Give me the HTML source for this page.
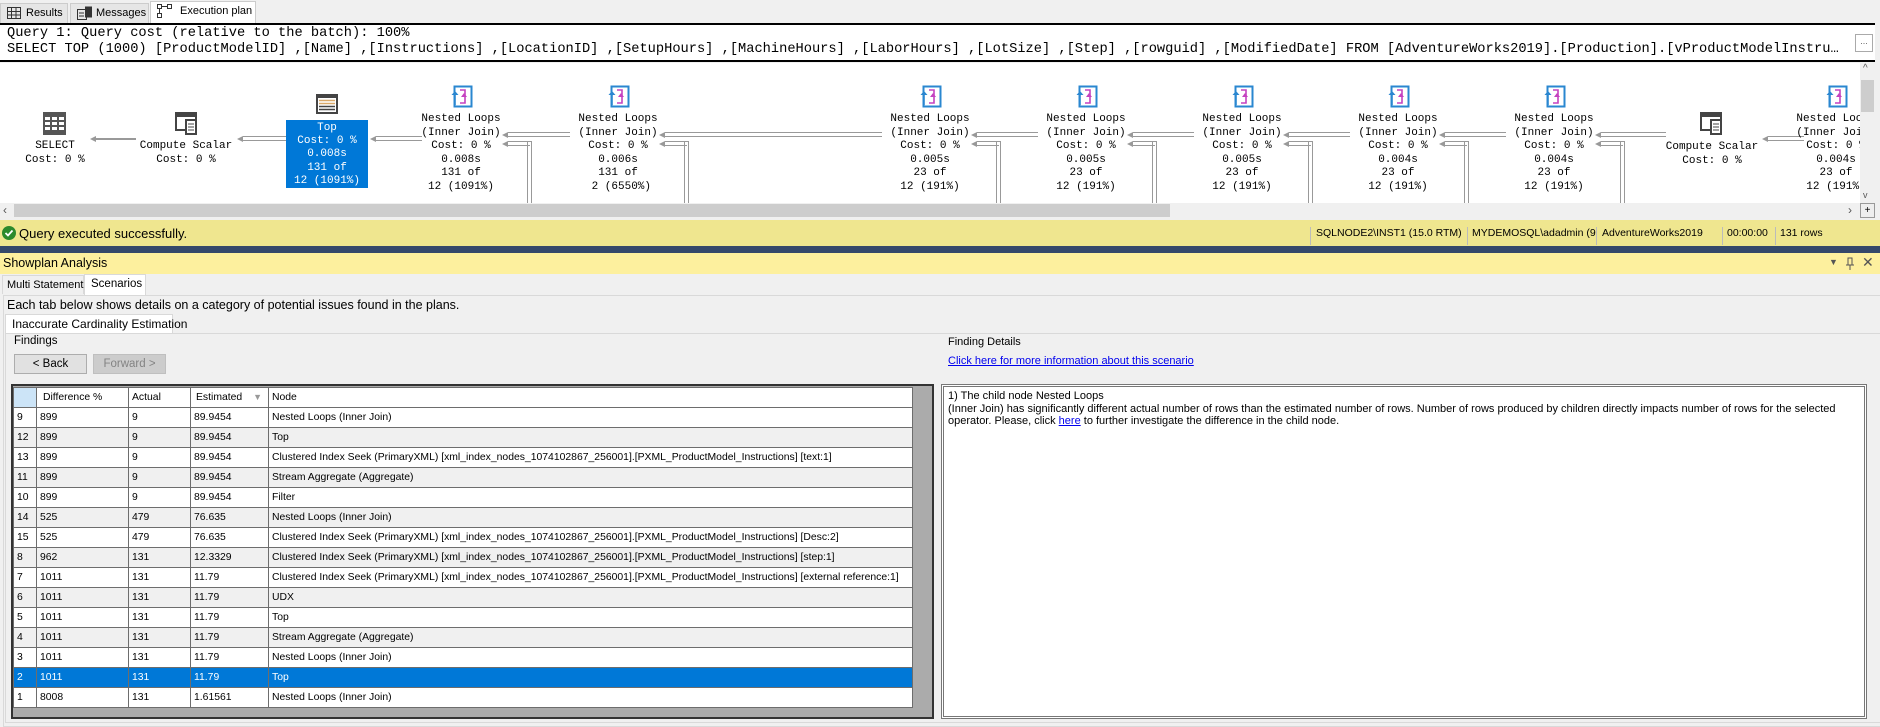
<!DOCTYPE html>
<html><head><meta charset="utf-8"><style>
*{margin:0;padding:0;box-sizing:border-box}
body{width:1880px;height:727px;position:relative;background:#f0f0f0;font-family:"Liberation Sans",sans-serif;font-size:12px;color:#000;overflow:hidden;white-space:nowrap}
.a{position:absolute}
.tab{position:absolute;top:3px;height:20px;background:#e6e6e6;border:1px solid #ccc;border-bottom:none;font-size:11px;line-height:18px;padding-left:25px;overflow:hidden}
.mono{font-family:"Liberation Mono",monospace}
.node{position:absolute;width:140px;text-align:center;font-family:"Liberation Mono",monospace;font-size:11px;line-height:13.5px;white-space:pre}
.dl{position:absolute;height:5px;border-top:1px solid #999;border-bottom:1px solid #999}
.dv{position:absolute;width:5px;border-left:1px solid #999;border-right:1px solid #999}
.ah{position:absolute;width:0;height:0;border-top:3px solid transparent;border-bottom:3px solid transparent;border-right:6px solid #999}
table{border-collapse:collapse;font-size:10.4px;table-layout:fixed;width:899px}
td{border:1px solid #6d6d6d;height:20px;padding:0 0 0 3px;white-space:nowrap;overflow:hidden}
.sb{position:absolute;top:227px;height:18px;border-left:1px solid #bbb;padding-left:5px;font-size:10.5px;overflow:hidden}
</style></head><body>
<div class="a" style="left:0;top:0;width:1880px;height:23px;background:#f0f0f0"></div>
<div class="tab" style="left:0;width:68px">Results</div>
<div class="tab" style="left:70px;width:79px">Messages</div>
<div class="tab" style="left:150px;top:1px;height:22px;width:106px;background:#fff;padding-left:29px">Execution plan</div>
<svg class="a" style="left:7px;top:7px" width="14" height="12"><rect x=".5" y=".5" width="13" height="11" fill="none" stroke="#333"/><path d="M1 4.5H13M1 8H13M4.5 1V11M9 1V11" stroke="#333"/></svg>
<svg class="a" style="left:77px;top:6px" width="16" height="14"><rect x=".5" y="3.5" width="9" height="10" fill="none" stroke="#333"/><rect x="8" y=".5" width="7" height="11" fill="#333"/><path d="M2 7h5M2 10h5" stroke="#333"/></svg>
<svg class="a" style="left:157px;top:4px" width="16" height="14"><rect x=".5" y=".5" width="4" height="4" fill="none" stroke="#333"/><rect x="10.5" y=".5" width="4" height="4" fill="none" stroke="#333"/><rect x=".5" y="9.5" width="4" height="4" fill="none" stroke="#333"/><path d="M5 2.5h5M2.5 5v4" stroke="#333"/></svg>
<div class="a" style="left:0;top:23px;width:1875px;height:39px;background:#fff;border-top:2px solid #000;border-bottom:2px solid #000"></div>
<div class="a mono" style="left:7px;top:26px;font-size:13.7px;line-height:16px;white-space:pre">Query 1: Query cost (relative to the batch): 100%
SELECT TOP (1000) [ProductModelID] ,[Name] ,[Instructions] ,[LocationID] ,[SetupHours] ,[MachineHours] ,[LaborHours] ,[LotSize] ,[Step] ,[rowguid] ,[ModifiedDate] FROM [AdventureWorks2019].[Production].[vProductModelInstru…</div>
<div class="a" style="left:1855px;top:34px;width:18px;height:18px;border:1px solid #aaa;background:#fff;font-size:9px;text-align:center;line-height:12px;color:#666">...</div>
<div class="a" style="left:0;top:63px;width:1860px;height:140px;background:#fff"></div>

<svg class="a" style="left:43px;top:112px" width="23" height="23"><rect x="0" y="0" width="23" height="23" fill="#555"/><g fill="#fff"><rect x="2" y="5" width="5" height="3"/><rect x="9" y="5" width="5" height="3"/><rect x="16" y="5" width="5" height="3"/><rect x="2" y="10" width="5" height="3"/><rect x="9" y="10" width="5" height="3"/><rect x="16" y="10" width="5" height="3"/><rect x="2" y="15" width="5" height="3"/><rect x="9" y="15" width="5" height="3"/><rect x="16" y="15" width="5" height="3"/></g></svg>
<div class="node" style="left:-15px;top:140px">SELECT
Cost: 0 %</div>
<div class="a" style="left:96px;top:138px;width:40px;height:2px;background:#999"></div><div class="ah" style="left:90px;top:136px"></div>
<svg class="a" style="left:175px;top:112px" width="23" height="23"><rect x="1" y="1" width="20" height="17" fill="#fff" stroke="#444" stroke-width="2"/><rect x="1" y="1" width="20" height="4" fill="#444"/><rect x="11" y="8" width="10" height="14" fill="#fff" stroke="#444" stroke-width="2"/><path d="M13 12h6M13 15h6M13 18h6" stroke="#444"/></svg>
<div class="node" style="left:116px;top:140px">Compute Scalar
Cost: 0 %</div>
<div class="dl" style="left:243px;top:136px;width:43px"></div><div class="ah" style="left:237px;top:136px"></div>
<svg class="a" style="left:316px;top:94px" width="22" height="20"><rect x="0" y="0" width="22" height="20" fill="#444"/><rect x="2" y="4" width="18" height="14" fill="#fff"/><path d="M3 6.5h16M3 9.5h16" stroke="#d9a96a" stroke-width="1.5"/><path d="M3 12.5h16M3 15.5h16" stroke="#444" stroke-width="1.5"/></svg>
<div class="a" style="left:286px;top:120px;width:82px;height:68px;background:#0078d7"></div>
<div class="node" style="left:257px;top:122px;color:#fff;line-height:13.2px">Top
Cost: 0 %
0.008s
131 of
12 (1091%)</div>
<div class="dl" style="left:376px;top:136px;width:46px"></div><div class="ah" style="left:370px;top:136px"></div>

<div id="nl"></div>
<script>
var cs=[461,618,930,1086,1242,1398,1554],d=[["0.008s","131 of","12 (1091%)"],["0.006s","131 of"," 2 (6550%)"],["0.005s","23 of","12 (191%)"],["0.005s","23 of","12 (191%)"],["0.005s","23 of","12 (191%)"],["0.004s","23 of","12 (191%)"],["0.004s","23 of","12 (191%)"]];
var h="";
function icon(c){return '<svg class="a" style="left:'+(c-10)+'px;top:85px" width="22" height="23"><rect x="3.5" y="1.5" width="17" height="20" fill="#fff" stroke="#2a87d0" stroke-width="2"/><path d="M9 5h5v13H9" fill="none" stroke="#c542c0" stroke-width="1.6"/><path d="M13 8l3 4h-6z" fill="#c542c0"/><path d="M4 20V9" stroke="#2a87d0" stroke-width="1.6"/><path d="M0.5 10l3.5-4 3.5 4z" fill="#2a87d0"/></svg>';}
for(var i=0;i<cs.length;i++){var c=cs[i];
h+=icon(c);
h+='<div class="node" style="left:'+(c-70)+'px;top:113px">Nested Loops\n(Inner Join)\nCost: 0 %\n'+d[i].join("\n")+'</div>';
h+='<div class="dl" style="left:'+(c+47)+'px;top:141px;width:22px;border-right:0"></div><div class="ah" style="left:'+(c+41)+'px;top:141px"></div>';
h+='<div class="dv" style="left:'+(c+66)+'px;top:141px;height:62px;border-top:1px solid #999"></div>';
var nx=(i<cs.length-1)?cs[i+1]-48:1666;
h+='<div class="dl" style="left:'+(c+47)+'px;top:132px;width:'+(nx-c-47)+'px"></div><div class="ah" style="left:'+(c+41)+'px;top:132px"></div>';
}
h+='<svg class="a" style="left:1700px;top:112px" width="23" height="23"><rect x="1" y="1" width="20" height="17" fill="#fff" stroke="#444" stroke-width="2"/><rect x="1" y="1" width="20" height="4" fill="#444"/><rect x="11" y="8" width="10" height="14" fill="#fff" stroke="#444" stroke-width="2"/><path d="M13 12h6M13 15h6M13 18h6" stroke="#444"/></svg>';
h+='<div class="node" style="left:1642px;top:141px">Compute Scalar\nCost: 0 %</div>';
h+='<div class="dl" style="left:1768px;top:136px;width:36px"></div><div class="ah" style="left:1762px;top:136px"></div>';
h+=icon(1836);
h+='<div class="node" style="left:1766px;top:113px">Nested Loops\n(Inner Join)\nCost: 0 %\n0.004s\n23 of\n12 (191%)</div>';
document.getElementById("nl").outerHTML=h;
</script>
<div class="a" style="left:1860px;top:63px;width:15px;height:140px;background:#f0f0f0"></div>
<div class="a" style="left:1861px;top:80px;width:13px;height:32px;background:#cdcdcd"></div>
<div class="a" style="left:1863px;top:63px;font-size:10px;color:#555">&#94;</div>
<div class="a" style="left:1863px;top:190px;font-size:9px;color:#555">v</div>
<div class="a" style="left:0;top:203px;width:1860px;height:15px;background:#f0f0f0"></div>
<div class="a" style="left:14px;top:204px;width:1156px;height:13px;background:#cdcdcd"></div>
<div class="a" style="left:3px;top:203px;font-size:12px;color:#555">&lsaquo;</div>
<div class="a" style="left:1848px;top:203px;font-size:12px;color:#555">&rsaquo;</div>
<div class="a" style="left:1860px;top:203px;width:15px;height:15px;border:1px solid #999;background:#eee;font-size:10px;text-align:center;line-height:13px">+</div>

<div class="a" style="left:0;top:220px;width:1880px;height:26px;background:#efe68f"></div>
<svg class="a" style="left:2px;top:226px" width="14" height="14"><circle cx="7" cy="7" r="7" fill="#2c8a2c"/><path d="M3.5 7l2.5 2.5 4.5-5" stroke="#fff" stroke-width="1.8" fill="none"/></svg>
<div class="a" style="left:19px;top:226px;font-size:13px">Query executed successfully.</div>
<div class="sb" style="left:1310px;width:156px">SQLNODE2\INST1 (15.0 RTM)</div>
<div class="sb" style="left:1467px;width:129px;padding-left:4px">MYDEMOSQL\adadmin (91)</div>
<div class="sb" style="left:1596px;width:126px">AdventureWorks2019</div>
<div class="sb" style="left:1722px;width:53px;padding-left:4px">00:00:00</div>
<div class="sb" style="left:1775px;width:90px;padding-left:4px">131 rows</div>
<div class="a" style="left:0;top:246px;width:1880px;height:7px;background:#34486a"></div>

<div class="a" style="left:0;top:253px;width:1880px;height:21px;background:#fdf09e"></div>
<div class="a" style="left:3px;top:256px;font-size:12.5px">Showplan Analysis</div>
<div class="a" style="left:1829px;top:257px;font-size:9px;color:#555">&#9660;</div>
<svg class="a" style="left:1845px;top:257px" width="10" height="14"><path d="M3 1h4v7H3zM1 8h8M5 8v5" stroke="#555" fill="none"/></svg>
<div class="a" style="left:1862px;top:254px;font-size:14px;color:#555">&#x2715;</div>
<div class="a" style="left:2px;top:275px;width:82px;height:19px;border:1px solid #d9d9d9;border-bottom:none;font-size:11px;line-height:18px;padding-left:4px">Multi Statement</div>
<div class="a" style="left:84px;top:274px;width:62px;height:21px;background:#fff;border:1px solid #d9d9d9;border-bottom:none;font-size:11.5px;line-height:18px;padding-left:6px">Scenarios</div>
<div class="a" style="left:3px;top:295px;width:1877px;height:432px;border:1px solid #d9d9d9;border-right:none"></div>
<div class="a" style="left:7px;top:298px;font-size:12.5px">Each tab below shows details on a category of potential issues found in the plans.</div>
<div class="a" style="left:5px;top:314px;width:168px;height:20px;background:#fff;border:1px solid #d9d9d9;border-bottom:none;font-size:12px;line-height:18px;padding-left:6px">Inaccurate Cardinality Estimation</div>
<div class="a" style="left:5px;top:333px;width:1875px;height:390px;border:1px solid #d9d9d9;border-right:none"></div>
<div class="a" style="left:14px;top:335px;font-size:11.5px">Findings</div>
<div class="a" style="left:14px;top:354px;width:73px;height:20px;background:#e1e1e1;border:1px solid #adadad;font-size:11.5px;text-align:center;line-height:18px">&lt; Back</div>
<div class="a" style="left:93px;top:354px;width:73px;height:20px;background:#ccc;border:1px solid #bfbfbf;color:#838383;font-size:11.5px;text-align:center;line-height:18px">Forward &gt;</div>
<div class="a" style="left:948px;top:336px;font-size:11px">Finding Details</div>
<div class="a" style="left:948px;top:355px;font-size:11px;color:#00e;text-decoration:underline">Click here for more information about this scenario</div>

<div class="a" style="left:11px;top:384px;width:923px;height:335px;background:#ababab;border:2px solid #333"></div>
<div class="a" style="left:13px;top:387px">
<table>
<colgroup><col style="width:23px"><col style="width:92px"><col style="width:62px"><col style="width:78px"><col style="width:644px"></colgroup>
<tr style="background:#fff"><td style="background:#cce4f7;padding:0"></td><td style="padding-left:6px">Difference %</td><td>Actual</td><td style="padding-left:5px">Estimated <span style="color:#999;font-size:9px;margin-left:8px">&#9660;</span></td><td>Node</td></tr>
<tr style="background:#fff"><td>9</td><td>899</td><td>9</td><td>89.9454</td><td>Nested Loops (Inner Join)</td></tr>
<tr style="background:#f0f0f0"><td>12</td><td>899</td><td>9</td><td>89.9454</td><td>Top</td></tr>
<tr style="background:#fff"><td>13</td><td>899</td><td>9</td><td>89.9454</td><td>Clustered Index Seek (PrimaryXML) [xml_index_nodes_1074102867_256001].[PXML_ProductModel_Instructions] [text:1]</td></tr>
<tr style="background:#f0f0f0"><td>11</td><td>899</td><td>9</td><td>89.9454</td><td>Stream Aggregate (Aggregate)</td></tr>
<tr style="background:#fff"><td>10</td><td>899</td><td>9</td><td>89.9454</td><td>Filter</td></tr>
<tr style="background:#f0f0f0"><td>14</td><td>525</td><td>479</td><td>76.635</td><td>Nested Loops (Inner Join)</td></tr>
<tr style="background:#fff"><td>15</td><td>525</td><td>479</td><td>76.635</td><td>Clustered Index Seek (PrimaryXML) [xml_index_nodes_1074102867_256001].[PXML_ProductModel_Instructions] [Desc:2]</td></tr>
<tr style="background:#f0f0f0"><td>8</td><td>962</td><td>131</td><td>12.3329</td><td>Clustered Index Seek (PrimaryXML) [xml_index_nodes_1074102867_256001].[PXML_ProductModel_Instructions] [step:1]</td></tr>
<tr style="background:#fff"><td>7</td><td>1011</td><td>131</td><td>11.79</td><td>Clustered Index Seek (PrimaryXML) [xml_index_nodes_1074102867_256001].[PXML_ProductModel_Instructions] [external reference:1]</td></tr>
<tr style="background:#f0f0f0"><td>6</td><td>1011</td><td>131</td><td>11.79</td><td>UDX</td></tr>
<tr style="background:#fff"><td>5</td><td>1011</td><td>131</td><td>11.79</td><td>Top</td></tr>
<tr style="background:#f0f0f0"><td>4</td><td>1011</td><td>131</td><td>11.79</td><td>Stream Aggregate (Aggregate)</td></tr>
<tr style="background:#fff"><td>3</td><td>1011</td><td>131</td><td>11.79</td><td>Nested Loops (Inner Join)</td></tr>
<tr style="background:#0078d7;color:#fff"><td>2</td><td>1011</td><td>131</td><td>11.79</td><td>Top</td></tr>
<tr style="background:#fff"><td>1</td><td>8008</td><td>131</td><td>1.61561</td><td>Nested Loops (Inner Join)</td></tr>
</table></div>

<div class="a" style="left:941px;top:384px;width:926px;height:335px;background:#fff;border:3px double #777"></div>
<div class="a" style="left:948px;top:390px;width:900px;font-size:11px;line-height:12.5px;white-space:normal">1) The child node Nested Loops<br>(Inner Join) has significantly different actual number of rows than the estimated number of rows. Number of rows produced by children directly impacts number of rows for the selected operator. Please, click <span style="color:#00e;text-decoration:underline">here</span> to further investigate the difference in the child node.</div>
</body></html>
